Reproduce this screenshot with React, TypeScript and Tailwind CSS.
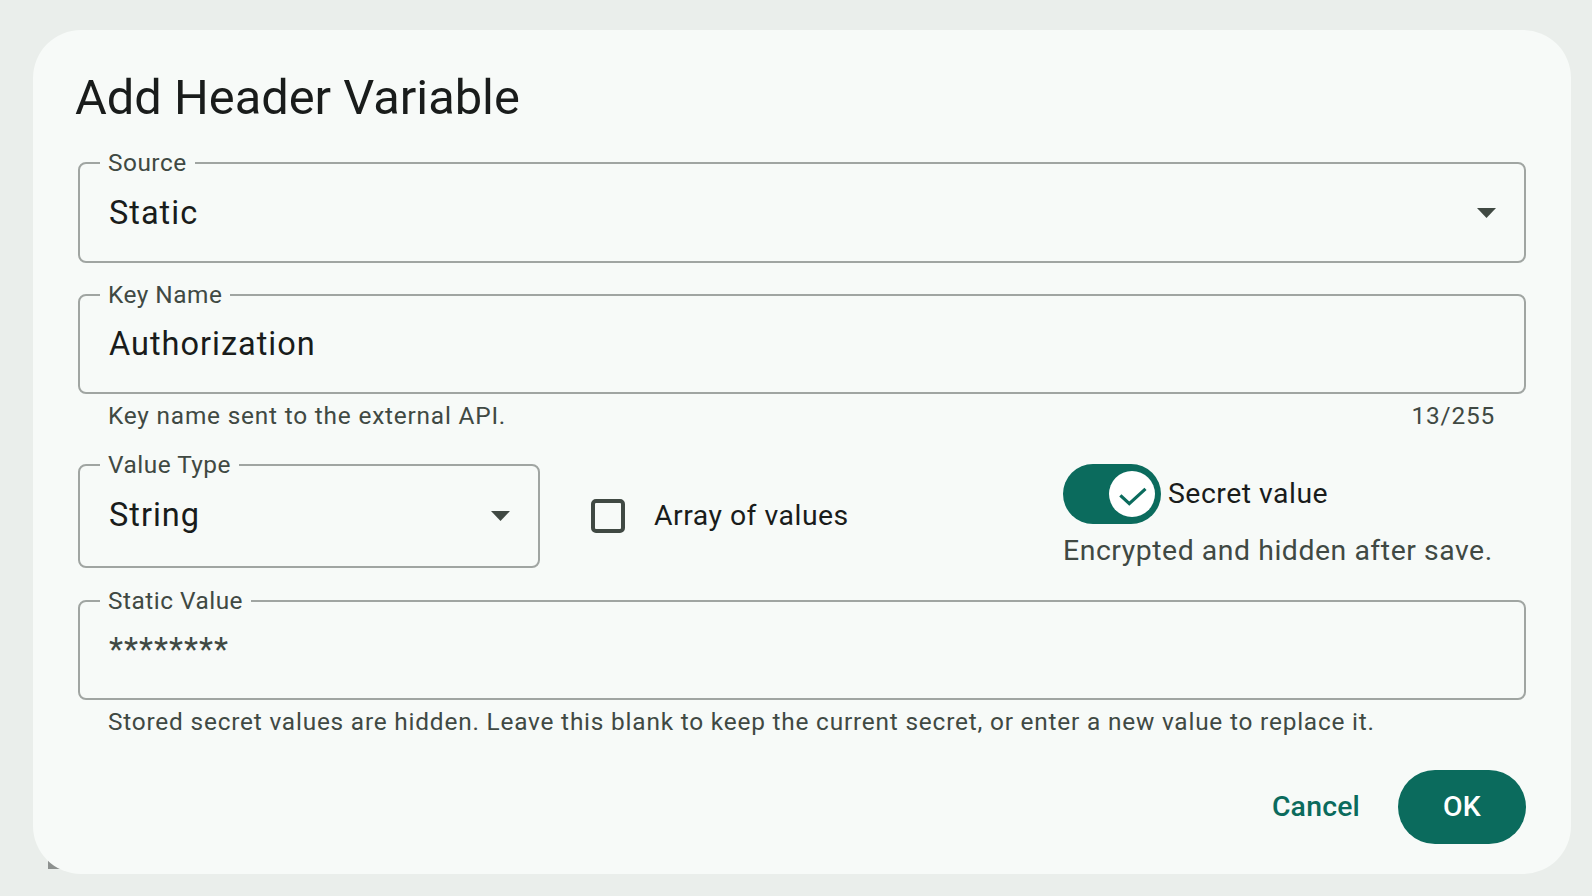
import React from "react";

// Outlined field with a notched floating label
const Field = ({
  label,
  h,
  children,
}: {
  label: string;
  h: string;
  children: React.ReactNode;
}) => (
  <div className={`relative flex items-center rounded-[8px] border-2 border-[#a0a5a2] pl-[29px] pr-[28px] ${h}`}>
    <span className="absolute left-[20px] top-[-17px] bg-[#f7faf8] px-[8px] text-[24.4px] leading-[32px] tracking-[0.5px] text-[#404943]">
      {label}
    </span>
    {children}
  </div>
);

const DropArrow = () => (
  <svg width="19" height="10" viewBox="0 0 19 10" className="ml-auto shrink-0">
    <path d="M0 0H19L9.5 10Z" fill="#404943" />
  </svg>
);

const Helper = ({ left, right }: { left: string; right?: string }) => (
  <div className="mt-[6px] flex justify-between pl-[30px] pr-[31px] text-[24.4px] leading-[32px] tracking-[0.8px] text-[#404943]">
    <span>{left}</span>
    {right && <span>{right}</span>}
  </div>
);

export default function App() {
  return (
    <div className="relative h-[896px] w-[1592px] overflow-hidden bg-[#eaeeeb] pl-[33px] pt-[30px] font-[Roboto,sans-serif]">
      {/* bit of something peeking out under the corner */}
      <div className="absolute left-[48px] top-[860px] h-[9px] w-[12px] bg-[#8d918f]"></div>

      <div className="relative z-10 w-[1538px] rounded-[48px] bg-[#f7faf8] px-[45px] pb-[30px] pt-[36px]">
        <h1 className="-ml-[3px] text-[48.8px] leading-[64px] text-[#191c1b]">Add Header Variable</h1>

        <div className="mt-[32px]">
          <Field label="Source" h="h-[101px]">
            <span className="text-[32.5px] leading-[48px] tracking-[1px] text-[#191c1b]">Static</span>
            <DropArrow />
          </Field>
        </div>

        <div className="mt-[31px]">
          <Field label="Key Name" h="h-[100px]">
            <span className="text-[32.5px] leading-[48px] tracking-[1px] text-[#191c1b]">Authorization</span>
          </Field>
        </div>
        <Helper left="Key name sent to the external API." right="13/255" />

        <div className="mt-[32px] flex items-start">
          <div className="w-[462px]">
            <Field label="Value Type" h="h-[104px]">
              <span className="-mt-[3px] text-[32.5px] leading-[48px] tracking-[1px] text-[#191c1b]">String</span>
              <DropArrow />
            </Field>
          </div>

          <div className="flex h-[104px] w-[523px] items-center pl-[51px]">
            <div className="h-[34px] w-[34px] shrink-0 rounded-[5px] border-[4px] border-[#404943]"></div>
            <span className="ml-[29px] text-[28.4px] leading-[40px] tracking-[0.5px] text-[#191c1b]">Array of values</span>
          </div>

          <div className="flex flex-col">
            <div className="flex items-center">
              <div className="flex h-[60px] w-[98px] items-center justify-end rounded-full bg-[#0b6b5d] pr-[6px]">
                <div className="h-[46px] w-[46px] rounded-full bg-white">
                  <svg width="46" height="46" viewBox="0 0 46 46">
                    <path
                      d="M12.5 25.5L20.3 32.7L35.3 19"
                      fill="none"
                      stroke="#0b6b5d"
                      strokeWidth="3.2"
                      strokeLinecap="square"
                    />
                  </svg>
                </div>
              </div>
              <span className="ml-[7px] text-[28.4px] leading-[40px] tracking-[0.5px] text-[#191c1b]">Secret value</span>
            </div>
            <span className="mt-[7px] text-[28.4px] leading-[40px] tracking-[0.55px] text-[#404943]">
              Encrypted and hidden after save.
            </span>
          </div>
        </div>

        <div className="mt-[29px]">
          <Field label="Static Value" h="h-[100px]">
            <span className="text-[32.5px] leading-[48px] tracking-[1px] text-[#404943]">********</span>
          </Field>
        </div>
        <Helper left="Stored secret values are hidden. Leave this blank to keep the current secret, or enter a new value to replace it." />

        <div className="mt-[32px] flex justify-end gap-[14px]">
          <button className="flex h-[74px] items-center rounded-full px-[24px] text-[28.4px] font-medium tracking-[0.2px] text-[#0b6b5d]">
            Cancel
          </button>
          <button className="flex h-[74px] w-[128px] items-center justify-center rounded-full bg-[#0b6b5d] text-[28.4px] font-medium tracking-[0.2px] text-white">
            OK
          </button>
        </div>
      </div>
    </div>
  );
}
